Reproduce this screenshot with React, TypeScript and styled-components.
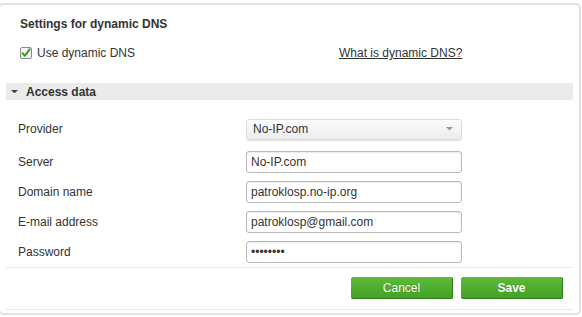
import styled, { createGlobalStyle } from "styled-components";

const GlobalStyle = createGlobalStyle`
  html, body {
    margin: 0;
    padding: 0;
    background: #ffffff;
  }
  body {
    font-family: "Liberation Sans", Arial, sans-serif;
    font-size: 12px;
    color: #333333;
  }
`;

const Panel = styled.div`
  box-sizing: border-box;
  width: 583px;
  height: 312px;
  margin: 3px 0 0 -2px;
  border: 2px solid #e2e2e2;
  border-radius: 5px;
  background: #fff;
  display: flex;
  flex-direction: column;
`;

const Header = styled.div`
  padding: 12px 0 0 20px;
  display: flex;
  flex-direction: column;
  gap: 15px;
`;

const Title = styled.div`
  font-weight: bold;
  font-size: 12px;
  line-height: 14px;
  color: #333;
`;

const CheckRow = styled.div`
  display: grid;
  grid-template-columns: 319px auto;
  align-items: center;
  height: 14px;
`;

const CheckLabel = styled.label`
  display: flex;
  align-items: center;
  gap: 5px;
  line-height: 14px;
`;

const HelpLink = styled.a`
  color: #333;
  text-decoration: underline;
  line-height: 14px;
  cursor: pointer;
`;

const Section = styled.div`
  margin: 23px 6px 0;
`;

const SectionBar = styled.div`
  height: 17px;
  background: #ebebeb;
  display: flex;
  align-items: center;
  gap: 8px;
  padding-left: 5px;
  font-weight: bold;
  line-height: 14px;
`;

const Form = styled.div`
  display: flex;
  flex-direction: column;
  gap: 8px;
  padding: 18px 0 4px 12px;
  border-bottom: 1px solid #e8e8e8;
`;

const Row = styled.div<{ $extra?: number }>`
  display: grid;
  grid-template-columns: 228px 216px;
  align-items: center;
  height: 22px;
  margin-bottom: ${(p) => p.$extra ?? 0}px;
`;

const Label = styled.span`
  line-height: 14px;
  color: #333;
`;

const Select = styled.div`
  box-sizing: border-box;
  height: 21px;
  display: flex;
  align-items: center;
  justify-content: space-between;
  padding: 0 8px 0 6px;
  border: 1px solid #dcdcdc;
  border-radius: 3px;
  background: linear-gradient(#fcfcfc, #ececec);
  box-shadow: 0 1px 1px rgba(0, 0, 0, 0.12);
  color: #333;
`;

const Input = styled.input`
  box-sizing: border-box;
  width: 216px;
  height: 22px;
  margin: 0;
  padding: 0 4px;
  border: 1px solid #b9b9b9;
  border-radius: 3px;
  box-shadow: inset 0 1px 1px rgba(0, 0, 0, 0.08);
  font-family: "Liberation Sans", Arial, sans-serif;
  font-size: 12px;
  color: #333;
  outline: none;
`;

const Actions = styled.div`
  display: flex;
  justify-content: flex-end;
  gap: 8px;
  padding: 9px 10px 10px 0;
  border-bottom: 1px solid #e8e8e8;
`;

const Button = styled.button<{ $primary?: boolean }>`
  box-sizing: border-box;
  width: 102px;
  height: 22px;
  border: none;
  border-right: 1px solid #2f7a19;
  border-bottom: 1px solid #2f7a19;
  border-radius: 2px;
  background: linear-gradient(#5fba3a, #43a126);
  color: #fff;
  font-family: "Liberation Sans", Arial, sans-serif;
  font-size: 12px;
  font-weight: ${(p) => (p.$primary ? "bold" : "normal")};
  text-shadow: 0 0 1px rgba(0, 60, 0, 0.4);
  cursor: pointer;
`;

const CheckIcon = () => (
  <svg width="12" height="12" viewBox="0 0 12 12">
    <rect x="0.5" y="0.5" width="11" height="11" rx="1.5" fill="#f4f4f4" stroke="#8c8c8c" />
    <path d="M2.6 6.2 L4.8 8.8 L9.6 2.4" fill="none" stroke="#3c9a1e" strokeWidth="2" strokeLinecap="round" strokeLinejoin="round" />
  </svg>
);

const Caret = ({ color, w }: { color: string; w: number }) => (
  <svg width={w} height={w / 2} viewBox="0 0 8 4">
    <path d="M0 0 L8 0 L4 4 Z" fill={color} />
  </svg>
);

const fields = [
  { label: "Server", value: "No-IP.com", type: "text" },
  { label: "Domain name", value: "patroklosp.no-ip.org", type: "text" },
  { label: "E-mail address", value: "patroklosp@gmail.com", type: "text" },
  { label: "Password", value: "password", type: "password" },
];

export default function App() {
  return (
    <>
      <GlobalStyle />
      <Panel>
        <Header>
          <Title>Settings for dynamic DNS</Title>
          <CheckRow>
            <CheckLabel>
              <CheckIcon />
              Use dynamic DNS
            </CheckLabel>
            <HelpLink>What is dynamic DNS?</HelpLink>
          </CheckRow>
        </Header>
        <Section>
          <SectionBar>
            <Caret color="#444" w={7} />
            Access data
          </SectionBar>
          <Form>
            <Row $extra={3}>
              <Label>Provider</Label>
              <Select>
                No-IP.com
                <Caret color="#9a9a9a" w={7} />
              </Select>
            </Row>
            {fields.map((f) => (
              <Row key={f.label}>
                <Label>{f.label}</Label>
                <Input type={f.type} defaultValue={f.value} readOnly />
              </Row>
            ))}
          </Form>
          <Actions>
            <Button>Cancel</Button>
            <Button $primary>Save</Button>
          </Actions>
        </Section>
      </Panel>
    </>
  );
}
